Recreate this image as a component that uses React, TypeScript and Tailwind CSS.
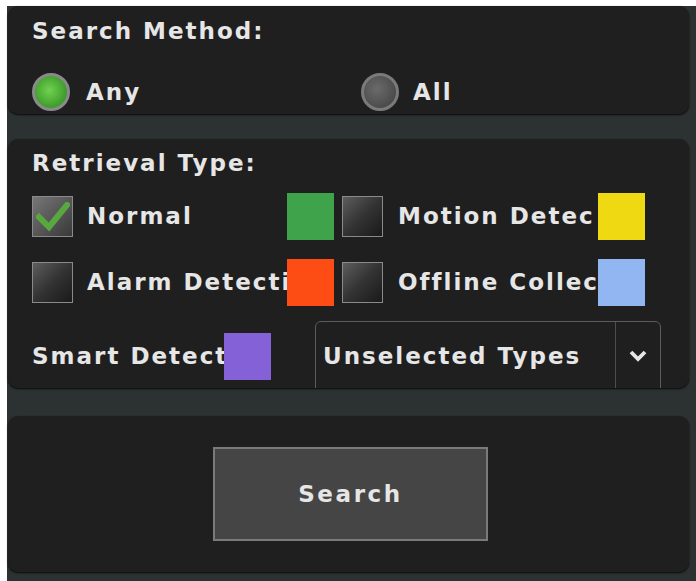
import React from 'react'

const font = { fontFamily: '"DejaVu Sans", Verdana, sans-serif' }

const Radio = ({ on }: { on?: boolean }) => (
  <div
    className={`w-[38px] h-[38px] rounded-full border-[3px] shrink-0 ${
      on
        ? 'border-[#8a8a8a] bg-[radial-gradient(circle_at_45%_45%,#6fd24f,#3e9a2c_70%)]'
        : 'border-[#7a7a7a] bg-[radial-gradient(circle_at_40%_40%,#6a6a6a,#4a4a4a_75%)]'
    }`}
  />
)

const Check = ({ on }: { on?: boolean }) => (
  <div
    className={`w-[41px] h-[41px] shrink-0 border border-[#8a8a8a] flex items-center justify-center ${
      on
        ? 'bg-gradient-to-br from-[#777] to-[#3a3a3a]'
        : 'bg-gradient-to-br from-[#5e5e5e] via-[#333] to-[#1a1a1a]'
    }`}
  >
    {on && (
      <svg width="34" height="30" viewBox="0 0 34 30">
        <path
          d="M3 15 L13 25 L31 3"
          fill="none"
          stroke="#59a83f"
          strokeWidth="6"
          strokeLinecap="square"
        />
      </svg>
    )}
  </div>
)

const Swatch = ({ color }: { color: string }) => (
  <div className={`w-[47px] h-[47px] shrink-0 ${color}`} />
)

export default function App() {
  return (
    <div
      className="w-[696px] h-[581px] bg-white pt-[6px] pl-[7px] overflow-hidden text-[#e6e6e6] font-bold text-[23px] tracking-[2px]"
      style={font}
    >
      <div className="h-full bg-[#2c3131] pl-px pr-[7px] flex flex-col">
        {/* Search method */}
        <div className="h-[108px] shrink-0 bg-[#1f1f1f] rounded-[10px] shadow-[0_1px_2px_#0a0a0a] pl-[24px] pt-[11px]">
          <div className="h-[28px] leading-[28px]">Search Method:</div>
          <div className="mt-[28px] flex items-center h-[38px]">
            <div className="w-[329px] flex items-center gap-[16px]">
              <Radio on />
              <span>Any</span>
            </div>
            <div className="flex items-center gap-[14px]">
              <Radio />
              <span>All</span>
            </div>
          </div>
        </div>

        {/* Retrieval type */}
        <div className="mt-[25px] h-[249px] shrink-0 bg-[#1f1f1f] rounded-[10px] shadow-[0_1px_2px_#0a0a0a] overflow-hidden pl-[24px] pt-[10px]">
          <div className="h-[28px] leading-[28px]">Retrieval Type:</div>

          <div className="mt-[16px] flex items-center h-[47px]">
            <Check on />
            <div className="ml-[14px] w-[200px] whitespace-nowrap">Normal</div>
            <Swatch color="bg-[#3fa34c]" />
            <div className="ml-[8px]">
              <Check />
            </div>
            <div className="ml-[15px] w-[200px] whitespace-nowrap">Motion Detec</div>
            <Swatch color="bg-[#efd913]" />
          </div>

          <div className="mt-[19px] flex items-center h-[47px]">
            <Check />
            <div className="ml-[14px] w-[200px] whitespace-nowrap">Alarm Detecti</div>
            <Swatch color="bg-[#fd4d15]" />
            <div className="ml-[8px]">
              <Check />
            </div>
            <div className="ml-[15px] w-[200px] whitespace-nowrap">Offline Collec</div>
            <Swatch color="bg-[#92b6f2]" />
          </div>

          <div className="mt-[15px] flex items-center h-[70px]">
            <div className="w-[192px] whitespace-nowrap">Smart Detect</div>
            <Swatch color="bg-[#8461d6]" />
            <div className="ml-[44px] w-[346px] h-[70px] border border-[#5c5c5c] rounded-t-[6px] flex items-center">
              <div className="flex-1 pl-[7px] whitespace-nowrap">Unselected Types</div>
              <div className="w-[45px] h-full border-l border-[#4e4e4e] flex items-center justify-center">
                <svg width="20" height="16" viewBox="0 0 20 16">
                  <path d="M3 4 L10 11 L17 4" fill="none" stroke="#e6e6e6" strokeWidth="3.8" />
                </svg>
              </div>
            </div>
          </div>
        </div>

        {/* Search button */}
        <div className="mt-[28px] h-[156px] shrink-0 bg-[#1f1f1f] rounded-[10px] shadow-[0_1px_2px_#0a0a0a] flex items-center justify-center">
          <button
            className="w-[275px] h-[94px] bg-[#454545] border-2 border-[#7a7a7a] text-[#e6e6e6] font-bold text-[23px] tracking-[2.6px] translate-x-[2px]"
            style={font}
          >
            Search
          </button>
        </div>
      </div>
    </div>
  )
}
